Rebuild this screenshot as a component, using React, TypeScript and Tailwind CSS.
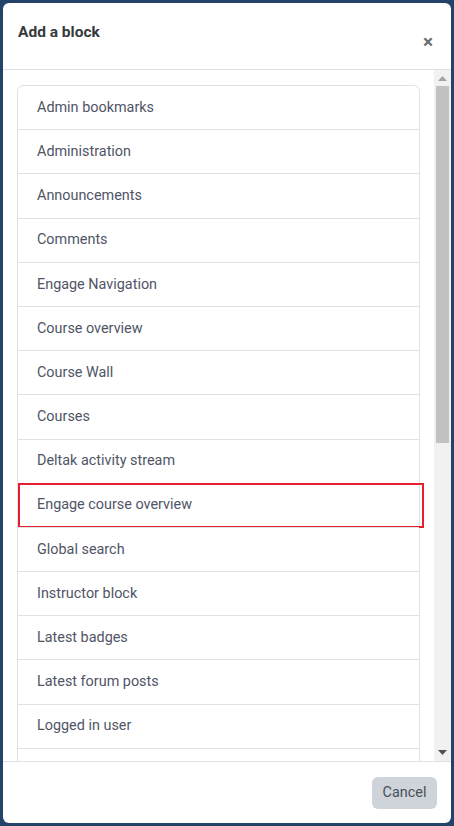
import React from "react";

const blocks = [
  "Admin bookmarks",
  "Administration",
  "Announcements",
  "Comments",
  "Engage Navigation",
  "Course overview",
  "Course Wall",
  "Courses",
  "Deltak activity stream",
  "Engage course overview",
  "Global search",
  "Instructor block",
  "Latest badges",
  "Latest forum posts",
  "Logged in user",
  "Mentees",
];

const selected = "Engage course overview";

export default function App() {
  return (
    <div
      className="w-[454px] h-[826px] bg-[#23436a] p-[3px] overflow-hidden"
      style={{ fontFamily: "Roboto, 'Liberation Sans', sans-serif" }}
    >
      <div className="h-full bg-white rounded-[6px] flex flex-col overflow-hidden">
        {/* header */}
        <div className="h-[67px] shrink-0 border-b border-[#dee2e6] flex items-start justify-between pl-[15px] pr-[18px]">
          <h2 className="mt-[18px] text-[15.5px] font-bold text-[#373a3c] leading-[22px]">Add a block</h2>
          <button className="mt-[29px] text-[#6b6e71] text-[19px] leading-none font-bold">×</button>
        </div>

        {/* body */}
        <div className="flex-1 min-h-0 flex">
          <div className="flex-1 min-h-0 overflow-hidden pt-[15px] pl-[14px] pr-[14px]">
            <ul className="border border-[#dee2e6] rounded-t-[6px]">
              {blocks.map((b, i) => (
                <li
                  key={b}
                  className={
                    "relative flex items-center pl-[19px] text-[14.4px] text-[#4f5566] " +
                    (i > 0 ? "h-[44.2px] border-t border-[#dee2e6]" : "h-[43.2px]")
                  }
                >
                  {b}
                  {b === selected && (
                    <span className="absolute left-0 right-[-5px] top-[-1px] bottom-[-1px] border-2 border-[#e5202e] pointer-events-none" />
                  )}
                </li>
              ))}
            </ul>
          </div>
          {/* scrollbar */}
          <div className="w-[17px] shrink-0 bg-[#f1f1f1] flex flex-col items-center">
            <div className="h-[16px] w-full flex items-center justify-center">
              <svg width="9" height="5" viewBox="0 0 9 5">
                <path d="M0 5 L4.5 0 L9 5 Z" fill="#a3a3a3" />
              </svg>
            </div>
            <div className="w-[13px] h-[357px] bg-[#c1c1c1]" />
            <div className="flex-1" />
            <div className="h-[17px] w-full flex items-center justify-center">
              <svg width="9" height="5" viewBox="0 0 9 5">
                <path d="M0 0 L9 0 L4.5 5 Z" fill="#505050" />
              </svg>
            </div>
          </div>
        </div>

        {/* footer */}
        <div className="h-[62px] shrink-0 border-t border-[#dee2e6] flex items-center justify-end pr-[14px]">
          <button className="h-[32px] w-[65px] rounded-[6px] bg-[#ced4da] text-[#495057] text-[14.4px]">
            Cancel
          </button>
        </div>
      </div>
    </div>
  );
}
